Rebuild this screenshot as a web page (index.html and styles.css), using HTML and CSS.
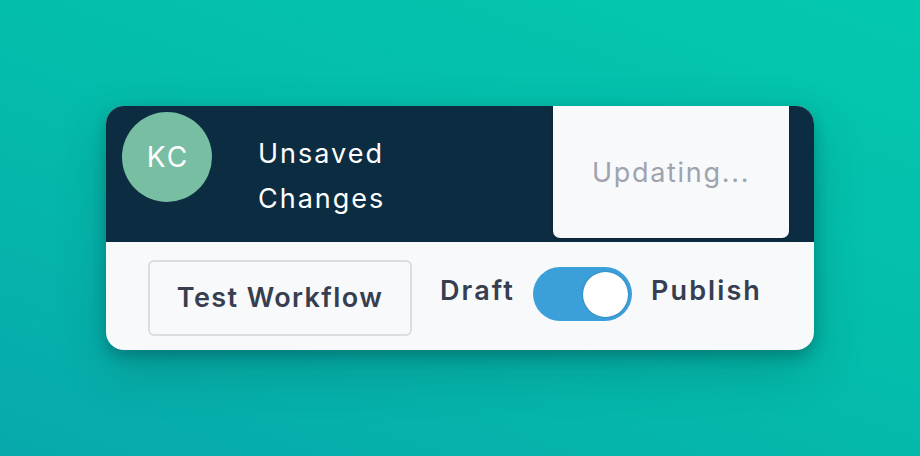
FILE: index.html
```html
<!DOCTYPE html>
<html lang="en">
<head>
  <meta charset="UTF-8">
  <meta name="viewport" content="width=device-width, initial-scale=1.0">
  <link rel="stylesheet" href="styles.css">
  <title>Workflow</title>
</head>
<body>
  <div class="card">
    <div class="card-top">
      <div class="avatar">KC</div>
      <p class="status">Unsaved<br>Changes</p>
      <button class="updating">Updating...</button>
    </div>
    <div class="card-bottom">
      <button class="test-button">Test Workflow</button>
      <span class="label">Draft</span>
      <div class="toggle">
        <div class="knob"></div>
      </div>
      <span class="label">Publish</span>
    </div>
  </div>
</body>
</html>
```

FILE: styles.css
```css
body {
  margin: 0;
  height: 456px;
  font-family: 'Inter', 'Noto Sans', sans-serif;
  background: linear-gradient(200deg, #03c8ae 0%, #04bcab 50%, #07a9ab 100%);
  padding: 106px 0 0 106px;
  box-sizing: border-box;
}

.card {
  width: 708px;
  border-radius: 18px;
  overflow: hidden;
  background-color: #f8f9fb;
  box-shadow: 0 6px 14px rgba(0, 50, 55, 0.3), 0 20px 50px rgba(0, 50, 60, 0.22);
}

.card-top {
  height: 136px;
  background-color: #0c2c41;
  display: flex;
  align-items: flex-start;
}

.avatar {
  width: 90px;
  height: 90px;
  margin: 6px 0 0 16px;
  border-radius: 50%;
  background-color: #77bea2;
  color: #fff;
  font-size: 28px;
  letter-spacing: 2px;
  text-indent: 2px;
  display: flex;
  align-items: center;
  justify-content: center;
}

.status {
  margin: 0 0 0 46px;
  padding-top: 4px;
  align-self: center;
  color: #fff;
  font-size: 27px;
  letter-spacing: 2px;
  line-height: 45px;
}

.updating {
  margin: 0 25px 0 auto;
  width: 236px;
  height: 132px;
  border: none;
  border-radius: 0 0 7px 7px;
  background-color: #f8f9fb;
  color: #9ea3ae;
  font-family: inherit;
  font-size: 27px;
  letter-spacing: 1.7px;
  padding: 0;
  box-shadow: 0 1px 3px rgba(0, 0, 0, 0.2);
}

.card-bottom {
  height: 108px;
  display: flex;
  align-items: center;
  padding-left: 42px;
}

.test-button {
  width: 264px;
  height: 76px;
  border: 2px solid #dcdde1;
  border-radius: 6px;
  background-color: #f8f9fb;
  color: #363e4f;
  font-family: inherit;
  font-size: 27px;
  font-weight: 600;
  letter-spacing: 1.4px;
  padding: 0 0 2px;
  margin-top: 4px;
}

.label {
  color: #363e4f;
  font-size: 27px;
  font-weight: 600;
  letter-spacing: 2.1px;
  margin-left: 28px;
  margin-bottom: 11px;
}

.toggle {
  width: 99px;
  height: 54px;
  margin-left: 18px;
  margin-bottom: 4px;
  border-radius: 27px;
  background-color: #3b9fda;
  display: flex;
  align-items: center;
  justify-content: flex-end;
  padding-right: 4px;
  box-sizing: border-box;
}

.knob {
  width: 45px;
  height: 45px;
  border-radius: 50%;
  background-color: #fff;
  box-shadow: 0 0 2px rgba(0, 0, 0, 0.3);
}

.toggle + .label {
  margin-left: 19px;
}
```
